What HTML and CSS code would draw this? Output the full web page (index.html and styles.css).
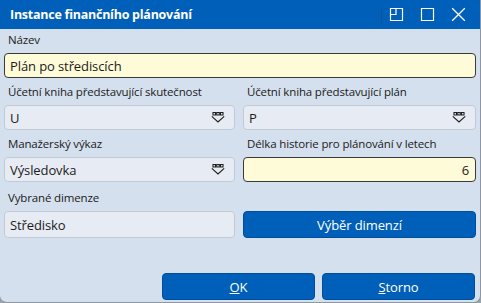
FILE: index.html
```html
<!DOCTYPE html>
<html>
   <head>
      <meta charset="utf-8">
      <title>Instance finančního plánování</title>
      <link rel="stylesheet" href="styles.css">
   </head>
   <body>
      <div class="Window">
         <div class="TitleBar">
            <span class="TitleText">Instance finančního plánování</span>
            <span class="TitleSep"></span>
            <svg class="TitleIcon" width="15" height="15" viewBox="0 0 15 15">
               <path d="M1.5 1.5H13.5V13.5H1.5Z M7 1.5V7.5H1.5" fill="none" stroke="#fff" stroke-width="1.2"/>
            </svg>
            <svg class="TitleIcon" width="15" height="15" viewBox="0 0 15 15">
               <path d="M1.5 1.5H13.5V13.5H1.5Z" fill="none" stroke="#fff" stroke-width="1.2"/>
            </svg>
            <svg class="TitleIcon" width="15" height="15" viewBox="0 0 15 15">
               <path d="M1.2 1.2L13.8 13.8M13.8 1.2L1.2 13.8" fill="none" stroke="#fff" stroke-width="1.3"/>
            </svg>
         </div>

         <div class="Body">
            <div class="Field Wide">
               <div class="Label">Název</div>
               <div class="Box Edit">Plán po střediscích</div>
            </div>

            <div class="Field">
               <div class="Label">Účetní kniha představující skutečnost</div>
               <div class="Box Combo"><span>U</span><svg class="Drop" width="14" height="11" viewBox="0 0 14 11"><path d="M2 0.5h2.5v2.5h-2.5Z M5.75 0.5h2.5v2.5h-2.5Z M9.5 0.5h2.5v2.5h-2.5Z M0.8 4.3L7 10L13.2 4.3" fill="none" stroke="#1e1e1e" stroke-width="1.1"/></svg></div>
            </div>
            <div class="Field">
               <div class="Label">Účetní kniha představující plán</div>
               <div class="Box Combo"><span>P</span><svg class="Drop" width="14" height="11" viewBox="0 0 14 11"><path d="M2 0.5h2.5v2.5h-2.5Z M5.75 0.5h2.5v2.5h-2.5Z M9.5 0.5h2.5v2.5h-2.5Z M0.8 4.3L7 10L13.2 4.3" fill="none" stroke="#1e1e1e" stroke-width="1.1"/></svg></div>
            </div>

            <div class="Field">
               <div class="Label">Manažerský výkaz</div>
               <div class="Box Combo"><span>Výsledovka</span><svg class="Drop" width="14" height="11" viewBox="0 0 14 11"><path d="M2 0.5h2.5v2.5h-2.5Z M5.75 0.5h2.5v2.5h-2.5Z M9.5 0.5h2.5v2.5h-2.5Z M0.8 4.3L7 10L13.2 4.3" fill="none" stroke="#1e1e1e" stroke-width="1.1"/></svg></div>
            </div>
            <div class="Field">
               <div class="Label">Délka historie pro plánování v letech</div>
               <div class="Box Edit Num">6</div>
            </div>

            <div class="Field Last">
               <div class="Label">Vybrané dimenze</div>
               <div class="Box Plain">Středisko</div>
            </div>
            <div class="Field Last NoLabel">
               <div class="Button">Výběr dimenzí</div>
            </div>
         </div>

         <div class="Footer">
            <div class="Button"><u>O</u>K</div>
            <div class="Button"><u>S</u>torno</div>
         </div>
      </div>
   </body>
</html>
```

FILE: styles.css
```css
html, body
{
   margin: 0;
   padding: 0;
   background: #9aa2ac;
}
body
{
   font-family: "Open Sans", "Noto Sans", sans-serif;
   font-size:   13px;
   color:       #1b1b1b;
}
.Window
{
   width:         480px;
   height:        302px;
   background:    #d5e0ee;
   border-right:  1px solid #8d96a1;
   border-bottom: 1px solid #8d96a1;
   border-radius: 0 0 7px 7px;
   display:       flex;
   flex-direction: column;
   overflow:      hidden;
}
.TitleBar
{
   height:      29px;
   background:  #005fb8;
   display:     flex;
   align-items: center;
   padding:     0 14px 0 10px;
   gap:         16px;
   color:       #fff;
}
.TitleText
{
   flex:        1;
   font-weight: 700;
   font-size:   12.5px;
   letter-spacing: -0.25px;
   margin-top:  -1px;
}
.TitleSep
{
   width:      1px;
   height:     16px;
   background: #1d4f86;
   margin-right: -9px;
}
.TitleIcon
{
   display: block;
}
.Body
{
   display:  grid;
   grid-template-columns: 231px 233px;
   column-gap: 8px;
   row-gap:  6px;
   padding:  3px 5px 0 4px;
}
.Wide
{
   grid-column: 1 / 3;
}
.Last
{
   margin-top: 2px;
}
.Label
{
   font-size:   11.5px;
   line-height: 16px;
   padding-left: 4px;
   margin-bottom: 5px;
   color:       #202020;
   letter-spacing: -0.15px;
}
.NoLabel
{
   display:         flex;
   flex-direction:  column;
   justify-content: flex-end;
}
.Box
{
   height:        25px;
   box-sizing:    border-box;
   border-radius: 4px;
   display:       flex;
   align-items:   center;
   padding:       0 6px 0 5px;
   font-size:     13px;
   letter-spacing: -0.1px;
}
.Edit
{
   background: #fefbd9;
   border:     1px solid #3a3a3a;
}
.Num
{
   justify-content: flex-end;
}
.Combo
{
   background:      #e7ecf4;
   border:          1px solid #c3cad3;
   justify-content: space-between;
   padding-right:   9px;
}
.Plain
{
   background: #e7ecf4;
   border:     1px solid #c3cad3;
   height:     27px;
}
.Drop
{
   display: block;
}
.Button
{
   height:          27px;
   box-sizing:      border-box;
   background:      #005fb8;
   border:          1px solid #004f9c;
   border-radius:   4px;
   color:           #fff;
   display:         flex;
   align-items:     center;
   justify-content: center;
   font-size:       13px;
   letter-spacing:  -0.1px;
}
.Footer
{
   margin-top:      auto;
   display:         flex;
   justify-content: flex-end;
   gap:             7px;
   padding:         0 5px 2px 0;
}
.Footer .Button
{
   width: 153px;
}
```
